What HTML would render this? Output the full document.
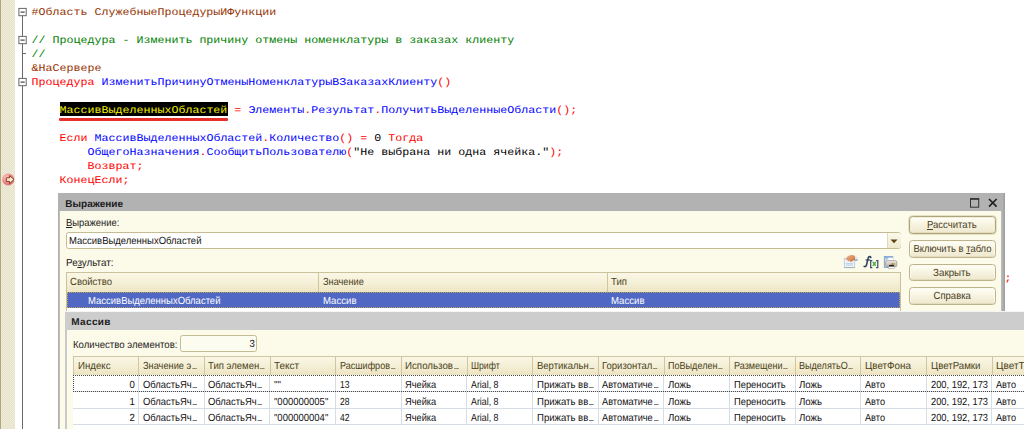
<!DOCTYPE html>
<html><head><meta charset="utf-8">
<style>
html,body{margin:0;padding:0;}
body{width:1024px;height:429px;overflow:hidden;background:#fff;position:relative;font-family:"Liberation Sans",sans-serif;text-rendering:geometricPrecision;}
.abs{position:absolute;}
#gutter{left:0;top:0;width:15px;height:429px;background:repeating-conic-gradient(#E6E2CC 0% 25%,#EEEBD9 0% 50%) 1px 0/2px 2px;border-left:1px solid #B0A980;box-sizing:border-box;}
#foldline{left:22px;top:12px;width:1px;height:417px;background:#6a6a6a;}
.fold{left:19px;width:7px;height:7px;border:1px solid #777;background:#fff;box-sizing:border-box;}
.fold i{position:absolute;left:1px;top:2px;width:3px;height:1px;background:#333;}
.tick{left:22px;width:4px;height:1px;background:#6a6a6a;}
.cl{left:31.5px;height:14px;line-height:14px;transform:scaleY(0.89);transform-origin:0 10.2px;font-family:"Liberation Mono",monospace;font-size:11.6667px;white-space:pre;color:#000;}
.r{color:#FF0000}.b{color:#0000FF}.g{color:#008000}.p{color:#963200}
.hl{background:#000;color:#F4F000;}
/* dialog */
#d1{left:58px;top:193px;width:947px;height:240px;background:#FCFAE8;}
#d1t{left:0;top:0;width:947px;height:18px;background:#B2B2B2;}
.ui{font-size:10.3px;color:#222;white-space:nowrap;line-height:12px;}
.btn{left:850.5px;width:87.5px;height:17.6px;box-sizing:border-box;border:1px solid #BDB48E;border-radius:3.5px;background:linear-gradient(#FFFFF8,#F8F4E2 45%,#EEE8CE);text-align:center;font-size:10.3px;line-height:17px;color:#4a4024;box-shadow:inset 0 -1px 0 0 #E2DBBC, inset 0 0 0 1px #FCFAEE;}
.th{position:absolute;top:0;height:100%;box-sizing:border-box;border-left:1px solid #CFC6A0;padding-left:3.5px;font-size:10.3px;color:#4a3f20;white-space:nowrap;overflow:hidden;}
.td{position:absolute;box-sizing:border-box;font-size:10.3px;color:#111;white-space:nowrap;overflow:hidden;}
.el{display:inline-block;width:5px;height:1px;margin-left:1px;background:currentColor;opacity:.55;vertical-align:baseline;}
.sx{display:inline-block;transform-origin:0 50%;white-space:nowrap;}
.sxr{transform-origin:100% 50%;}
.sxc{transform-origin:50% 50%;}
</style></head><body>
<div id="gutter" class="abs"></div>
<div id="foldline" class="abs"></div>
<svg class="abs" style="left:17px;top:6px" width="12" height="12" viewBox="0 0 12 12"><rect x="1.9" y="2.4" width="7.3" height="7.3" fill="#fff" stroke="#666" stroke-width="1"/><path d="M3.5 6.1H7.7" stroke="#222" stroke-width="1"/></svg>
<svg class="abs" style="left:17px;top:34px" width="12" height="12" viewBox="0 0 12 12"><rect x="1.9" y="2.4" width="7.3" height="7.3" fill="#fff" stroke="#666" stroke-width="1"/><path d="M3.5 6.1H7.7" stroke="#222" stroke-width="1"/></svg>
<svg class="abs" style="left:17px;top:76px" width="12" height="12" viewBox="0 0 12 12"><rect x="1.9" y="2.4" width="7.3" height="7.3" fill="#fff" stroke="#666" stroke-width="1"/><path d="M3.5 6.1H7.7" stroke="#222" stroke-width="1"/></svg>
<div class="abs tick" style="top:53px"></div>

<div class="abs cl p" style="top:5px">#Область СлужебныеПроцедурыИФункции</div>
<div class="abs cl g" style="top:33px">// Процедура - Изменить причину отмены номенклатуры в заказах клиенту</div>
<div class="abs cl g" style="top:47px">//</div>
<div class="abs cl p" style="top:61px">&amp;НаСервере</div>
<div class="abs cl" style="top:75px"><span class="r">Процедура</span> <span class="b">ИзменитьПричинуОтменыНоменклатурыВЗаказахКлиенту</span><span class="r">()</span></div>
<div class="abs" style="left:59.5px;top:102.2px;width:168px;height:13.8px;background:#000"></div>
<div class="abs" style="left:59px;top:118px;width:169px;height:2.5px;background:#E8302A;border-radius:1px"></div>
<div class="abs cl" style="top:103px">    <span style="color:#F4F000">МассивВыделенныхОбластей</span><span class="r"> = </span><span class="b">Элементы</span><span class="r">.</span><span class="b">Результат</span><span class="r">.</span><span class="b">ПолучитьВыделенныеОбласти</span><span class="r">();</span></div>
<div class="abs cl" style="top:131px">    <span class="r">Если</span> <span class="b">МассивВыделенныхОбластей</span><span class="r">.</span><span class="b">Количество</span><span class="r">() = </span>0<span class="r"> Тогда</span></div>
<div class="abs cl" style="top:145px">        <span class="b">ОбщегоНазначения</span><span class="r">.</span><span class="b">СообщитьПользователю</span><span class="r">(</span>"Не выбрана ни одна ячейка."<span class="r">);</span></div>
<div class="abs cl r" style="top:159px">        Возврат;</div>
<div class="abs cl r" style="top:173px">    КонецЕсли;</div>
<div class="abs cl r" style="top:271px;left:1004.5px">;</div>

<!-- breakpoint -->
<svg class="abs" style="left:1px;top:172px" width="15" height="15" viewBox="0 0 15 15">
<defs><radialGradient id="bg" cx="35%" cy="30%" r="75%"><stop offset="0" stop-color="#FBC4C0"/><stop offset="0.6" stop-color="#F08582"/><stop offset="1" stop-color="#D96E72"/></radialGradient></defs>
<circle cx="7.2" cy="7.6" r="6" fill="url(#bg)"/>
<path d="M5.3 5.8 H8.6 V3.6 L13 7.6 L8.6 11.6 V9.4 H5.3 Z" fill="#FCE6D6" stroke="#7A3212" stroke-width="0.9" stroke-linejoin="round"/>
</svg>

<div id="d1" class="abs">
 <div id="d1t" class="abs"></div>
 <div class="abs" style="left:0;top:18px;width:2px;height:230px;background:linear-gradient(90deg,#A8A8A8,#C4C4C4)"></div>
 <div class="abs" style="left:943px;top:18px;width:4px;height:230px;background:linear-gradient(90deg,#C0C0C0,#9c9c9c)"></div>
 <div class="abs" style="left:945px;top:0;width:2px;height:18px;background:linear-gradient(90deg,#ABABAB,#9c9c9c)"></div>
 <div class="abs ui" style="left:7.3px;top:5.6px;font-weight:bold;font-size:10px;color:#1c1c1c;letter-spacing:0">Выражение</div>
 <!-- max / close -->
 <svg class="abs" style="left:911px;top:4px" width="12" height="12" viewBox="0 0 12 12"><rect x="1.5" y="1.9" width="8.2" height="8.3" fill="none" stroke="#333" stroke-width="1"/><rect x="1" y="1.2" width="9.2" height="1.5" fill="#2e2e2e"/></svg>
 <svg class="abs" style="left:930px;top:5px" width="10" height="10" viewBox="0 0 10 10"><path d="M1 1 L8.6 8.6 M8.6 1 L1 8.6" stroke="#222" stroke-width="1.7" fill="none"/></svg>

 <div class="abs ui" style="left:8px;top:25.4px"><span class="sx" style="transform:scaleX(0.915)"><u>В</u>ыражение:</span></div>
 <div class="abs" style="left:8px;top:39px;width:835px;height:16.5px;box-sizing:border-box;border:1px solid #C6BC94;border-radius:2.5px;background:#fff"></div>
 <div class="abs" style="left:829px;top:40px;width:13px;height:14.5px;background:linear-gradient(#FBF9EC,#EFE9CF);border-left:1px solid #E0D9BC;border-radius:0 2px 2px 0"></div>
 <svg class="abs" style="left:832.4px;top:45.7px" width="8" height="5" viewBox="0 0 8 5"><path d="M0.5 0.5 H7.5 L4 4.2 Z" fill="#5b4514"/></svg>
 <div class="abs ui" style="left:10.8px;top:42.5px;color:#111"><span class="sx" style="transform:scaleX(0.922)">МассивВыделенныхОбластей</span></div>
 <div class="abs ui" style="left:8px;top:65px"><span class="sx" style="transform:scaleX(0.956)">Ре<u>з</u>ультат:</span></div>

 <!-- icons -->
 <svg class="abs" style="left:782px;top:59px" width="40" height="20" viewBox="0 0 40 20">
  <defs>
   <linearGradient id="dg" x1="0" y1="0" x2="0" y2="1"><stop offset="0" stop-color="#FFFFFF"/><stop offset="0.55" stop-color="#E4ECF7"/><stop offset="1" stop-color="#F6F9FD"/></linearGradient>
   <linearGradient id="hg" x1="0" y1="0" x2="1" y2="1"><stop offset="0" stop-color="#F0B58C"/><stop offset="0.6" stop-color="#D98B5C"/><stop offset="1" stop-color="#A9602F"/></linearGradient>
   <linearGradient id="cg" x1="0" y1="0" x2="0" y2="1"><stop offset="0" stop-color="#FAFBFE"/><stop offset="0.6" stop-color="#D9E2F0"/><stop offset="1" stop-color="#6F88AC"/></linearGradient>
  </defs>
  <rect x="4.3" y="6.4" width="10.4" height="9" fill="url(#dg)" stroke="#B4C6E0" stroke-width="0.8"/>
  <path d="M4.3 15.6H14.7" stroke="#94B0B4" stroke-width="0.9"/>
  <path d="M6 11.6H13M6 13.2H13" stroke="#BFCDE2" stroke-width="0.9"/>
  <path d="M5.5 7.6 C6.5 4.6 8.6 3.1 11.4 2.9 C13 2.8 14.6 3.6 15.4 4.2 L15.4 8.2 L13.2 8.6 L10.6 10.2 L9.6 8.6 L8.2 9.4 L7.2 8.0 Z" fill="url(#hg)"/>
  <rect x="15.2" y="3.7" width="2.5" height="5" fill="url(#cg)"/>
  <path d="M30.9 5.5 C30.4 4.3 28.6 4.2 28.2 6 L26.5 13 C26.2 14.4 25.2 15 24.1 14.4" stroke="#2F4560" stroke-width="1.55" fill="none" stroke-linecap="round"/>
  <path d="M25.6 8H30.2" stroke="#2F4560" stroke-width="1.2" fill="none"/>
  <path d="M32.3 8.6H30.7V15.6H32.3M36.2 8.6H37.8V15.6H36.2" stroke="#2F4560" stroke-width="1.15" fill="none"/>
  <path d="M32.8 10L35.8 13.8M35.8 10L32.8 13.8" stroke="#4FA83C" stroke-width="1.35" fill="none"/>
 </svg>
 <svg class="abs" style="left:824px;top:62px" width="17" height="15" viewBox="0 0 17 15">
  <defs>
   <linearGradient id="pg" x1="0" y1="0" x2="0" y2="1"><stop offset="0" stop-color="#EEEAE4"/><stop offset="1" stop-color="#BDAF9F"/></linearGradient>
  </defs>
  <rect x="2.3" y="1.5" width="8.4" height="11" fill="#C9DAEF" stroke="#6D99CB" stroke-width="0.8"/>
  <rect x="2.3" y="1.5" width="8.4" height="2" fill="#8FB0D6"/>
  <rect x="6" y="2.8" width="5.7" height="3.6" fill="#FBFCFE" stroke="#C5CCD6" stroke-width="0.5"/>
  <rect x="3.6" y="5.6" width="11.3" height="6.1" rx="1.6" fill="url(#pg)" stroke="#8E8984" stroke-width="0.6"/>
  <rect x="9.6" y="8" width="1.4" height="1.9" fill="#EE665C"/>
  <rect x="11.4" y="8" width="1.6" height="1.9" fill="#7BC46A"/>
  <rect x="7" y="9.9" width="5" height="1.9" fill="#1d1d1d"/>
  <rect x="6.4" y="11.8" width="5.8" height="1.6" fill="#FDFDFD" stroke="#9a9a9a" stroke-width="0.5"/>
 </svg>

 <!-- table 1 -->
 <div class="abs" style="left:8px;top:79px;width:835px;height:40px;box-sizing:border-box;border:1px solid #CBC29C;border-bottom:none;background:#fff"></div>
 <div class="abs" style="left:9px;top:80px;width:833px;height:18.5px;background:linear-gradient(#FAF7E6,#F5F0D8 50%,#EDE5C4)">
   <div class="th" style="left:0;width:252px;border-left:none;line-height:20px;padding-left:3px"><span class="sx" style="transform:scaleX(0.929)">Свойство</span></div>
   <div class="th" style="left:251.4px;width:288.5px;line-height:20px"><span class="sx" style="transform:scaleX(0.893)">Значение</span></div>
   <div class="th" style="left:539.6px;width:293px;line-height:20px"><span class="sx" style="transform:scaleX(0.932)">Тип</span></div>
 </div>
 <div class="abs" style="left:9px;top:98.5px;width:833px;height:16.5px;background:#5068C4;box-sizing:border-box;border:1px dotted #B9A45A"></div>
 <div class="abs ui" style="left:29.8px;top:102.6px;color:#fff"><span class="sx" style="transform:scaleX(0.922)">МассивВыделенныхОбластей</span></div>
 <div class="abs ui" style="left:264.8px;top:102.6px;color:#fff"><span class="sx" style="transform:scaleX(0.932)">Массив</span></div>
 <div class="abs ui" style="left:553.4px;top:102.6px;color:#fff"><span class="sx" style="transform:scaleX(0.932)">Массив</span></div>

 <div class="abs btn" style="top:23px;border-color:#ADA37C;box-shadow:0 0 0 0.5px #CFC8A6, inset 0 -1px 0 0 #E2DBBC, inset 0 0 0 1px #F3EED8"><span class="sx sxc" style="transform:scaleX(0.928)"><u>Р</u>ассчитать</span></div>
 <div class="abs btn" style="top:47px"><span class="sx sxc" style="transform:scaleX(0.917)">Включить в <u>т</u>абло</span></div>
 <div class="abs btn" style="top:70.5px"><span class="sx sxc" style="transform:scaleX(0.945)">Закрыть</span></div>
 <div class="abs btn" style="top:94px"><span class="sx sxc" style="transform:scaleX(0.923)">Справка</span></div>
</div>

<!-- dialog 2 -->
<div id="d2" class="abs" style="left:65px;top:311px;width:959px;height:118px;background:#FCFAE8">
 <div class="abs" style="left:0;top:0;width:959px;height:1px;background:#F4F4F4"></div>
 <div class="abs" style="left:0;top:1px;width:959px;height:18px;background:#CDCDCD"></div>
 <div class="abs" style="left:0;top:19px;width:2px;height:100px;background:#C9C9C9"></div>
 <div class="abs ui" style="left:6.3px;top:5.9px;font-weight:bold;font-size:10px;color:#1c1c1c;letter-spacing:0.35px">Массив</div>
 <div class="abs ui" style="left:8px;top:28.5px"><span class="sx" style="transform:scaleX(0.932)">Количество элементов:</span></div>
 <div class="abs" style="left:115px;top:24px;width:77px;height:17px;box-sizing:border-box;border:1px solid #C6BC94;border-radius:2.5px;background:#FDFCF0"></div>
 <div class="abs ui" style="left:115px;top:27.7px;width:74.5px;text-align:right;color:#111"><span class="sx sxr" style="transform:scaleX(0.932)">3</span></div>
 <div class="abs" style="left:8.0px;top:45.4px;width:951.0px;height:72.6px;background:#fff"></div>
<div class="abs" style="left:8.0px;top:45.4px;width:951.0px;height:18.8px;background:linear-gradient(#F9F6E4,#F4EFD6 50%,#ECE3C1);border-top:1px solid #CFC6A2;box-sizing:border-box">
<div class="th" style="left:0.0px;width:65.25px;line-height:19.8px"><span class="sx" style="transform:scaleX(0.939)">Индекс</span></div>
<div class="th" style="left:65.25px;width:65.66px;line-height:19.8px"><span class="sx" style="transform:scaleX(0.897)">Значение э<i class="el"></i></span></div>
<div class="th" style="left:130.91px;width:65.66px;line-height:19.8px"><span class="sx" style="transform:scaleX(0.927)">Тип элемен<i class="el"></i></span></div>
<div class="th" style="left:196.56px;width:65.66px;line-height:19.8px"><span class="sx" style="transform:scaleX(0.972)">Текст</span></div>
<div class="th" style="left:262.22px;width:65.66px;line-height:19.8px"><span class="sx" style="transform:scaleX(0.880)">Расшифров<i class="el"></i></span></div>
<div class="th" style="left:327.87px;width:65.66px;line-height:19.8px"><span class="sx" style="transform:scaleX(0.945)">Использов<i class="el"></i></span></div>
<div class="th" style="left:393.53px;width:65.66px;line-height:19.8px"><span class="sx" style="transform:scaleX(0.848)">Шрифт</span></div>
<div class="th" style="left:459.19px;width:65.66px;line-height:19.8px"><span class="sx" style="transform:scaleX(0.923)">Вертикальн<i class="el"></i></span></div>
<div class="th" style="left:524.84px;width:65.66px;line-height:19.8px"><span class="sx" style="transform:scaleX(0.923)">Горизонтал<i class="el"></i></span></div>
<div class="th" style="left:590.5px;width:65.66px;line-height:19.8px"><span class="sx" style="transform:scaleX(0.880)">ПоВыделен<i class="el"></i></span></div>
<div class="th" style="left:656.15px;width:65.66px;line-height:19.8px"><span class="sx" style="transform:scaleX(0.879)">Размещени<i class="el"></i></span></div>
<div class="th" style="left:721.81px;width:65.66px;line-height:19.8px"><span class="sx" style="transform:scaleX(0.881)">ВыделятьО<i class="el"></i></span></div>
<div class="th" style="left:787.47px;width:65.66px;line-height:19.8px"><span class="sx" style="transform:scaleX(0.957)">ЦветФона</span></div>
<div class="th" style="left:853.12px;width:65.66px;line-height:19.8px"><span class="sx" style="transform:scaleX(0.940)">ЦветРамки</span></div>
<div class="th" style="left:918.78px;width:65.66px;line-height:19.8px"><span class="sx" style="transform:scaleX(0.974)">ЦветТекста</span></div>
</div>
<div class="td" style="left:8.0px;top:64.2px;width:65.25px;height:16.62px;line-height:22.12px;text-align:right;padding-right:3.5px;"><span class="sx sxr" style="transform:scaleX(0.932)">0</span></div>
<div class="td" style="left:73.25px;top:64.2px;width:65.66px;height:16.62px;line-height:22.12px;padding-left:4.5px;"><span class="sx" style="transform:scaleX(0.916)">ОбластьЯч<i class="el"></i></span></div>
<div class="td" style="left:138.91px;top:64.2px;width:65.66px;height:16.62px;line-height:22.12px;padding-left:4.5px;"><span class="sx" style="transform:scaleX(0.916)">ОбластьЯч<i class="el"></i></span></div>
<div class="td" style="left:204.56px;top:64.2px;width:65.66px;height:16.62px;line-height:22.12px;padding-left:4.5px;"><span class="sx" style="transform:scaleX(0.932)">""</span></div>
<div class="td" style="left:270.22px;top:64.2px;width:65.66px;height:16.62px;line-height:22.12px;padding-left:4.5px;"><span class="sx" style="transform:scaleX(0.829)">13</span></div>
<div class="td" style="left:335.87px;top:64.2px;width:65.66px;height:16.62px;line-height:22.12px;padding-left:4.5px;"><span class="sx" style="transform:scaleX(0.899)">Ячейка</span></div>
<div class="td" style="left:401.53px;top:64.2px;width:65.66px;height:16.62px;line-height:22.12px;padding-left:4.5px;"><span class="sx" style="transform:scaleX(0.858)">Arial, 8</span></div>
<div class="td" style="left:467.19px;top:64.2px;width:65.66px;height:16.62px;line-height:22.12px;padding-left:4.5px;"><span class="sx" style="transform:scaleX(0.929)">Прижать вв<i class="el"></i></span></div>
<div class="td" style="left:532.84px;top:64.2px;width:65.66px;height:16.62px;line-height:22.12px;padding-left:4.5px;"><span class="sx" style="transform:scaleX(0.897)">Автоматиче<i class="el"></i></span></div>
<div class="td" style="left:598.5px;top:64.2px;width:65.66px;height:16.62px;line-height:22.12px;padding-left:4.5px;"><span class="sx" style="transform:scaleX(0.934)">Ложь</span></div>
<div class="td" style="left:664.15px;top:64.2px;width:65.66px;height:16.62px;line-height:22.12px;padding-left:4.5px;"><span class="sx" style="transform:scaleX(0.908)">Переносить</span></div>
<div class="td" style="left:729.81px;top:64.2px;width:65.66px;height:16.62px;line-height:22.12px;padding-left:4.5px;"><span class="sx" style="transform:scaleX(0.934)">Ложь</span></div>
<div class="td" style="left:795.47px;top:64.2px;width:65.66px;height:16.62px;line-height:22.12px;padding-left:4.5px;"><span class="sx" style="transform:scaleX(0.891)">Авто</span></div>
<div class="td" style="left:861.12px;top:64.2px;width:65.66px;height:16.62px;line-height:22.12px;padding-left:4.5px;"><span class="sx" style="transform:scaleX(0.905)">200, 192, 173</span></div>
<div class="td" style="left:926.78px;top:64.2px;width:65.66px;height:16.62px;line-height:22.12px;padding-left:4.5px;"><span class="sx" style="transform:scaleX(0.891)">Авто</span></div>
<div class="td" style="left:8.0px;top:80.82px;width:65.25px;height:16.62px;line-height:22.12px;text-align:right;padding-right:3.5px;"><span class="sx sxr" style="transform:scaleX(0.932)">1</span></div>
<div class="td" style="left:73.25px;top:80.82px;width:65.66px;height:16.62px;line-height:22.12px;padding-left:4.5px;"><span class="sx" style="transform:scaleX(0.916)">ОбластьЯч<i class="el"></i></span></div>
<div class="td" style="left:138.91px;top:80.82px;width:65.66px;height:16.62px;line-height:22.12px;padding-left:4.5px;"><span class="sx" style="transform:scaleX(0.916)">ОбластьЯч<i class="el"></i></span></div>
<div class="td" style="left:204.56px;top:80.82px;width:65.66px;height:16.62px;line-height:22.12px;padding-left:4.5px;"><span class="sx" style="transform:scaleX(0.922)">"000000005"</span></div>
<div class="td" style="left:270.22px;top:80.82px;width:65.66px;height:16.62px;line-height:22.12px;padding-left:4.5px;"><span class="sx" style="transform:scaleX(0.829)">28</span></div>
<div class="td" style="left:335.87px;top:80.82px;width:65.66px;height:16.62px;line-height:22.12px;padding-left:4.5px;"><span class="sx" style="transform:scaleX(0.899)">Ячейка</span></div>
<div class="td" style="left:401.53px;top:80.82px;width:65.66px;height:16.62px;line-height:22.12px;padding-left:4.5px;"><span class="sx" style="transform:scaleX(0.858)">Arial, 8</span></div>
<div class="td" style="left:467.19px;top:80.82px;width:65.66px;height:16.62px;line-height:22.12px;padding-left:4.5px;"><span class="sx" style="transform:scaleX(0.929)">Прижать вв<i class="el"></i></span></div>
<div class="td" style="left:532.84px;top:80.82px;width:65.66px;height:16.62px;line-height:22.12px;padding-left:4.5px;"><span class="sx" style="transform:scaleX(0.897)">Автоматиче<i class="el"></i></span></div>
<div class="td" style="left:598.5px;top:80.82px;width:65.66px;height:16.62px;line-height:22.12px;padding-left:4.5px;"><span class="sx" style="transform:scaleX(0.934)">Ложь</span></div>
<div class="td" style="left:664.15px;top:80.82px;width:65.66px;height:16.62px;line-height:22.12px;padding-left:4.5px;"><span class="sx" style="transform:scaleX(0.908)">Переносить</span></div>
<div class="td" style="left:729.81px;top:80.82px;width:65.66px;height:16.62px;line-height:22.12px;padding-left:4.5px;"><span class="sx" style="transform:scaleX(0.934)">Ложь</span></div>
<div class="td" style="left:795.47px;top:80.82px;width:65.66px;height:16.62px;line-height:22.12px;padding-left:4.5px;"><span class="sx" style="transform:scaleX(0.891)">Авто</span></div>
<div class="td" style="left:861.12px;top:80.82px;width:65.66px;height:16.62px;line-height:22.12px;padding-left:4.5px;"><span class="sx" style="transform:scaleX(0.905)">200, 192, 173</span></div>
<div class="td" style="left:926.78px;top:80.82px;width:65.66px;height:16.62px;line-height:22.12px;padding-left:4.5px;"><span class="sx" style="transform:scaleX(0.891)">Авто</span></div>
<div class="td" style="left:8.0px;top:97.45px;width:65.25px;height:16.62px;line-height:22.12px;text-align:right;padding-right:3.5px;"><span class="sx sxr" style="transform:scaleX(0.932)">2</span></div>
<div class="td" style="left:73.25px;top:97.45px;width:65.66px;height:16.62px;line-height:22.12px;padding-left:4.5px;"><span class="sx" style="transform:scaleX(0.916)">ОбластьЯч<i class="el"></i></span></div>
<div class="td" style="left:138.91px;top:97.45px;width:65.66px;height:16.62px;line-height:22.12px;padding-left:4.5px;"><span class="sx" style="transform:scaleX(0.916)">ОбластьЯч<i class="el"></i></span></div>
<div class="td" style="left:204.56px;top:97.45px;width:65.66px;height:16.62px;line-height:22.12px;padding-left:4.5px;"><span class="sx" style="transform:scaleX(0.922)">"000000004"</span></div>
<div class="td" style="left:270.22px;top:97.45px;width:65.66px;height:16.62px;line-height:22.12px;padding-left:4.5px;"><span class="sx" style="transform:scaleX(0.829)">42</span></div>
<div class="td" style="left:335.87px;top:97.45px;width:65.66px;height:16.62px;line-height:22.12px;padding-left:4.5px;"><span class="sx" style="transform:scaleX(0.899)">Ячейка</span></div>
<div class="td" style="left:401.53px;top:97.45px;width:65.66px;height:16.62px;line-height:22.12px;padding-left:4.5px;"><span class="sx" style="transform:scaleX(0.858)">Arial, 8</span></div>
<div class="td" style="left:467.19px;top:97.45px;width:65.66px;height:16.62px;line-height:22.12px;padding-left:4.5px;"><span class="sx" style="transform:scaleX(0.929)">Прижать вв<i class="el"></i></span></div>
<div class="td" style="left:532.84px;top:97.45px;width:65.66px;height:16.62px;line-height:22.12px;padding-left:4.5px;"><span class="sx" style="transform:scaleX(0.897)">Автоматиче<i class="el"></i></span></div>
<div class="td" style="left:598.5px;top:97.45px;width:65.66px;height:16.62px;line-height:22.12px;padding-left:4.5px;"><span class="sx" style="transform:scaleX(0.934)">Ложь</span></div>
<div class="td" style="left:664.15px;top:97.45px;width:65.66px;height:16.62px;line-height:22.12px;padding-left:4.5px;"><span class="sx" style="transform:scaleX(0.908)">Переносить</span></div>
<div class="td" style="left:729.81px;top:97.45px;width:65.66px;height:16.62px;line-height:22.12px;padding-left:4.5px;"><span class="sx" style="transform:scaleX(0.934)">Ложь</span></div>
<div class="td" style="left:795.47px;top:97.45px;width:65.66px;height:16.62px;line-height:22.12px;padding-left:4.5px;"><span class="sx" style="transform:scaleX(0.891)">Авто</span></div>
<div class="td" style="left:861.12px;top:97.45px;width:65.66px;height:16.62px;line-height:22.12px;padding-left:4.5px;"><span class="sx" style="transform:scaleX(0.905)">200, 192, 173</span></div>
<div class="td" style="left:926.78px;top:97.45px;width:65.66px;height:16.62px;line-height:22.12px;padding-left:4.5px;"><span class="sx" style="transform:scaleX(0.891)">Авто</span></div>
<div class="abs" style="left:8.0px;top:80.22px;width:951.0px;height:1px;background:#D6DDE5"></div>
<div class="abs" style="left:8.0px;top:96.85px;width:951.0px;height:1px;background:#D6DDE5"></div>
<div class="abs" style="left:8.0px;top:113.47px;width:951.0px;height:1px;background:#D6DDE5"></div>
<div class="abs" style="left:72.95px;top:64.2px;width:1px;height:49.88px;background:#D6DDE5"></div>
<div class="abs" style="left:138.61px;top:64.2px;width:1px;height:49.88px;background:#D6DDE5"></div>
<div class="abs" style="left:204.26px;top:64.2px;width:1px;height:49.88px;background:#D6DDE5"></div>
<div class="abs" style="left:269.92px;top:64.2px;width:1px;height:49.88px;background:#D6DDE5"></div>
<div class="abs" style="left:335.57px;top:64.2px;width:1px;height:49.88px;background:#D6DDE5"></div>
<div class="abs" style="left:401.23px;top:64.2px;width:1px;height:49.88px;background:#D6DDE5"></div>
<div class="abs" style="left:466.89px;top:64.2px;width:1px;height:49.88px;background:#D6DDE5"></div>
<div class="abs" style="left:532.54px;top:64.2px;width:1px;height:49.88px;background:#D6DDE5"></div>
<div class="abs" style="left:598.2px;top:64.2px;width:1px;height:49.88px;background:#D6DDE5"></div>
<div class="abs" style="left:663.85px;top:64.2px;width:1px;height:49.88px;background:#D6DDE5"></div>
<div class="abs" style="left:729.51px;top:64.2px;width:1px;height:49.88px;background:#D6DDE5"></div>
<div class="abs" style="left:795.17px;top:64.2px;width:1px;height:49.88px;background:#D6DDE5"></div>
<div class="abs" style="left:860.82px;top:64.2px;width:1px;height:49.88px;background:#D6DDE5"></div>
<div class="abs" style="left:926.48px;top:64.2px;width:1px;height:49.88px;background:#D6DDE5"></div>
<div class="abs" style="left:8.0px;top:64.0px;width:953.0px;height:17.23px;box-sizing:border-box;border:1px dotted #4a4a4a"></div>
<div class="abs" style="left:8.0px;top:45.4px;width:1px;height:18.8px;background:#CFC6A2"></div>
</div>
</body></html>
